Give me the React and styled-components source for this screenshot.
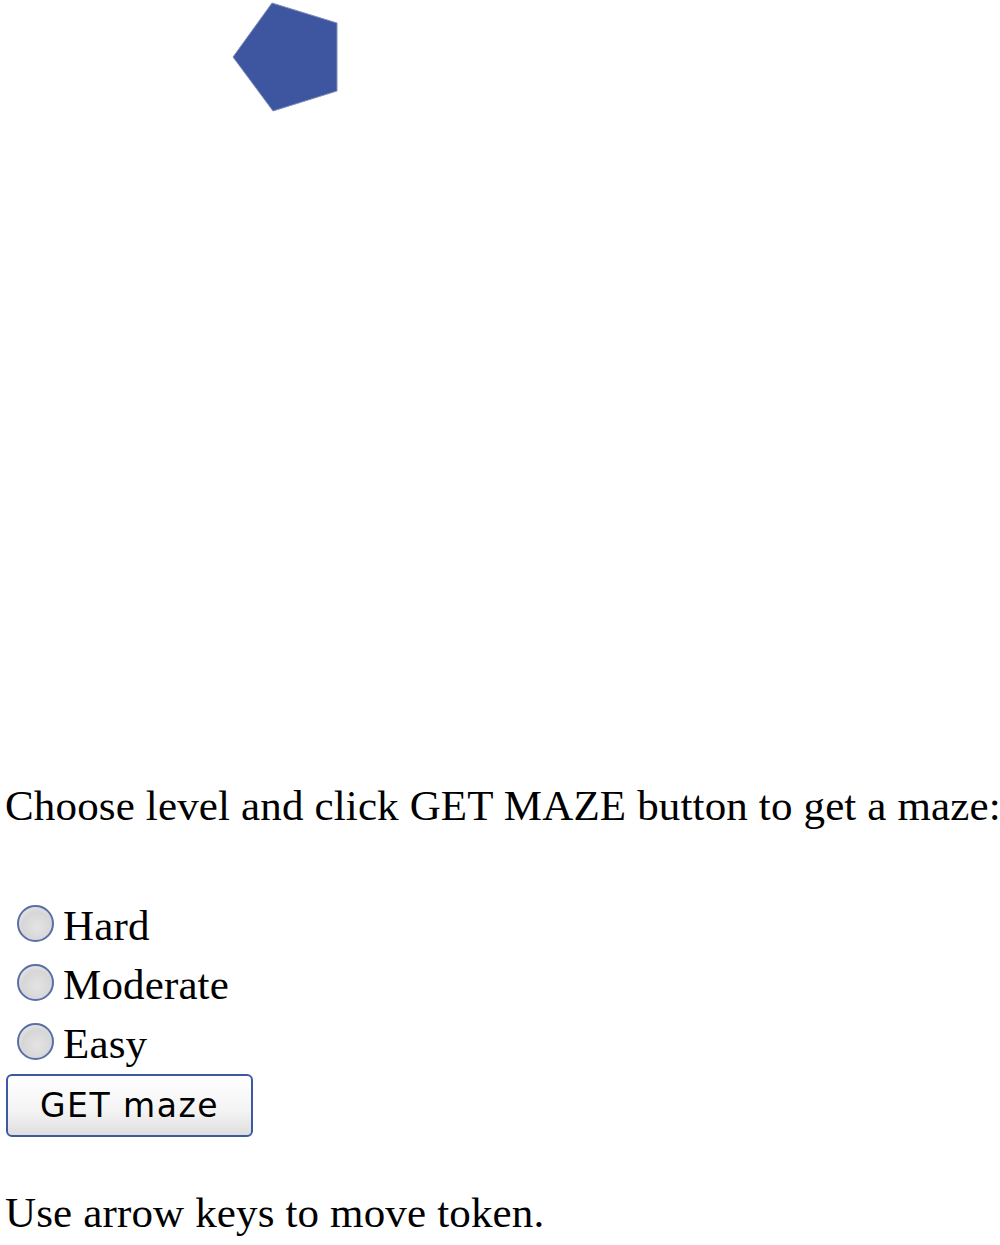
import styled, { createGlobalStyle } from "styled-components";

const GlobalStyle = createGlobalStyle`
  body {
    margin: 0;
    background: #fff;
    color: #000;
    font-family: "Liberation Serif", "Times New Roman", serif;
    font-size: 43px;
    letter-spacing: 0.15px;
    line-height: 60px;
  }
`;

const levels = ["Hard", "Moderate", "Easy"];

export default function App() {
  return (
    <>
      <GlobalStyle />
      <Page>
        <Board viewBox="0 0 1000 716" width="1000" height="716">
          <polygon
            points="272,3 337,23 337,91 273,111 233,57"
            fill="#3e56a0"
            stroke="#7f8fb8"
            strokeWidth="1"
          />
        </Board>
        <Text>Choose level and click GET MAZE button to get a maze:</Text>
        <Levels>
          {levels.map((level) => (
            <Level key={level}>
              <Radio type="radio" name="level" value={level} />
              {level}
            </Level>
          ))}
        </Levels>
        <Button type="button">GET maze</Button>
        <Hint>Use arrow keys to move token.</Hint>
      </Page>
    </>
  );
}

const Page = styled.div`
  display: flex;
  flex-direction: column;
  align-items: flex-start;
`;

const Board = styled.svg`
  display: block;
`;

const Text = styled.p`
  margin: 60px 0 0 5px;
  white-space: nowrap;
`;

const Levels = styled.div`
  display: flex;
  flex-direction: column;
  margin-top: 60px;
`;

const Level = styled.label`
  display: flex;
  align-items: center;
  height: 59px;
  padding-left: 17px;
  gap: 9px;
`;

const Radio = styled.input`
  appearance: none;
  margin: 0 0 4px 0;
  width: 37px;
  height: 37px;
  border-radius: 50%;
  border: 2px solid #5a6fa8;
  background: radial-gradient(circle at 55% 60%, #e4e4e4 0%, #d6d6d6 55%, #f4f4f4 100%);
  box-sizing: border-box;
`;

const Button = styled.button`
  margin: 1px 0 0 6px;
  width: 247px;
  height: 63px;
  border: 2px solid #3d5aa0;
  border-radius: 6px;
  background: linear-gradient(#ffffff, #f3f3f3 60%, #dedede);
  font-family: "DejaVu Sans", Verdana, sans-serif;
  font-size: 33px;
  letter-spacing: 1.5px;
  color: #000;
  padding: 0;
`;

const Hint = styled.p`
  margin: 46px 0 0 5px;
  white-space: nowrap;
`;
